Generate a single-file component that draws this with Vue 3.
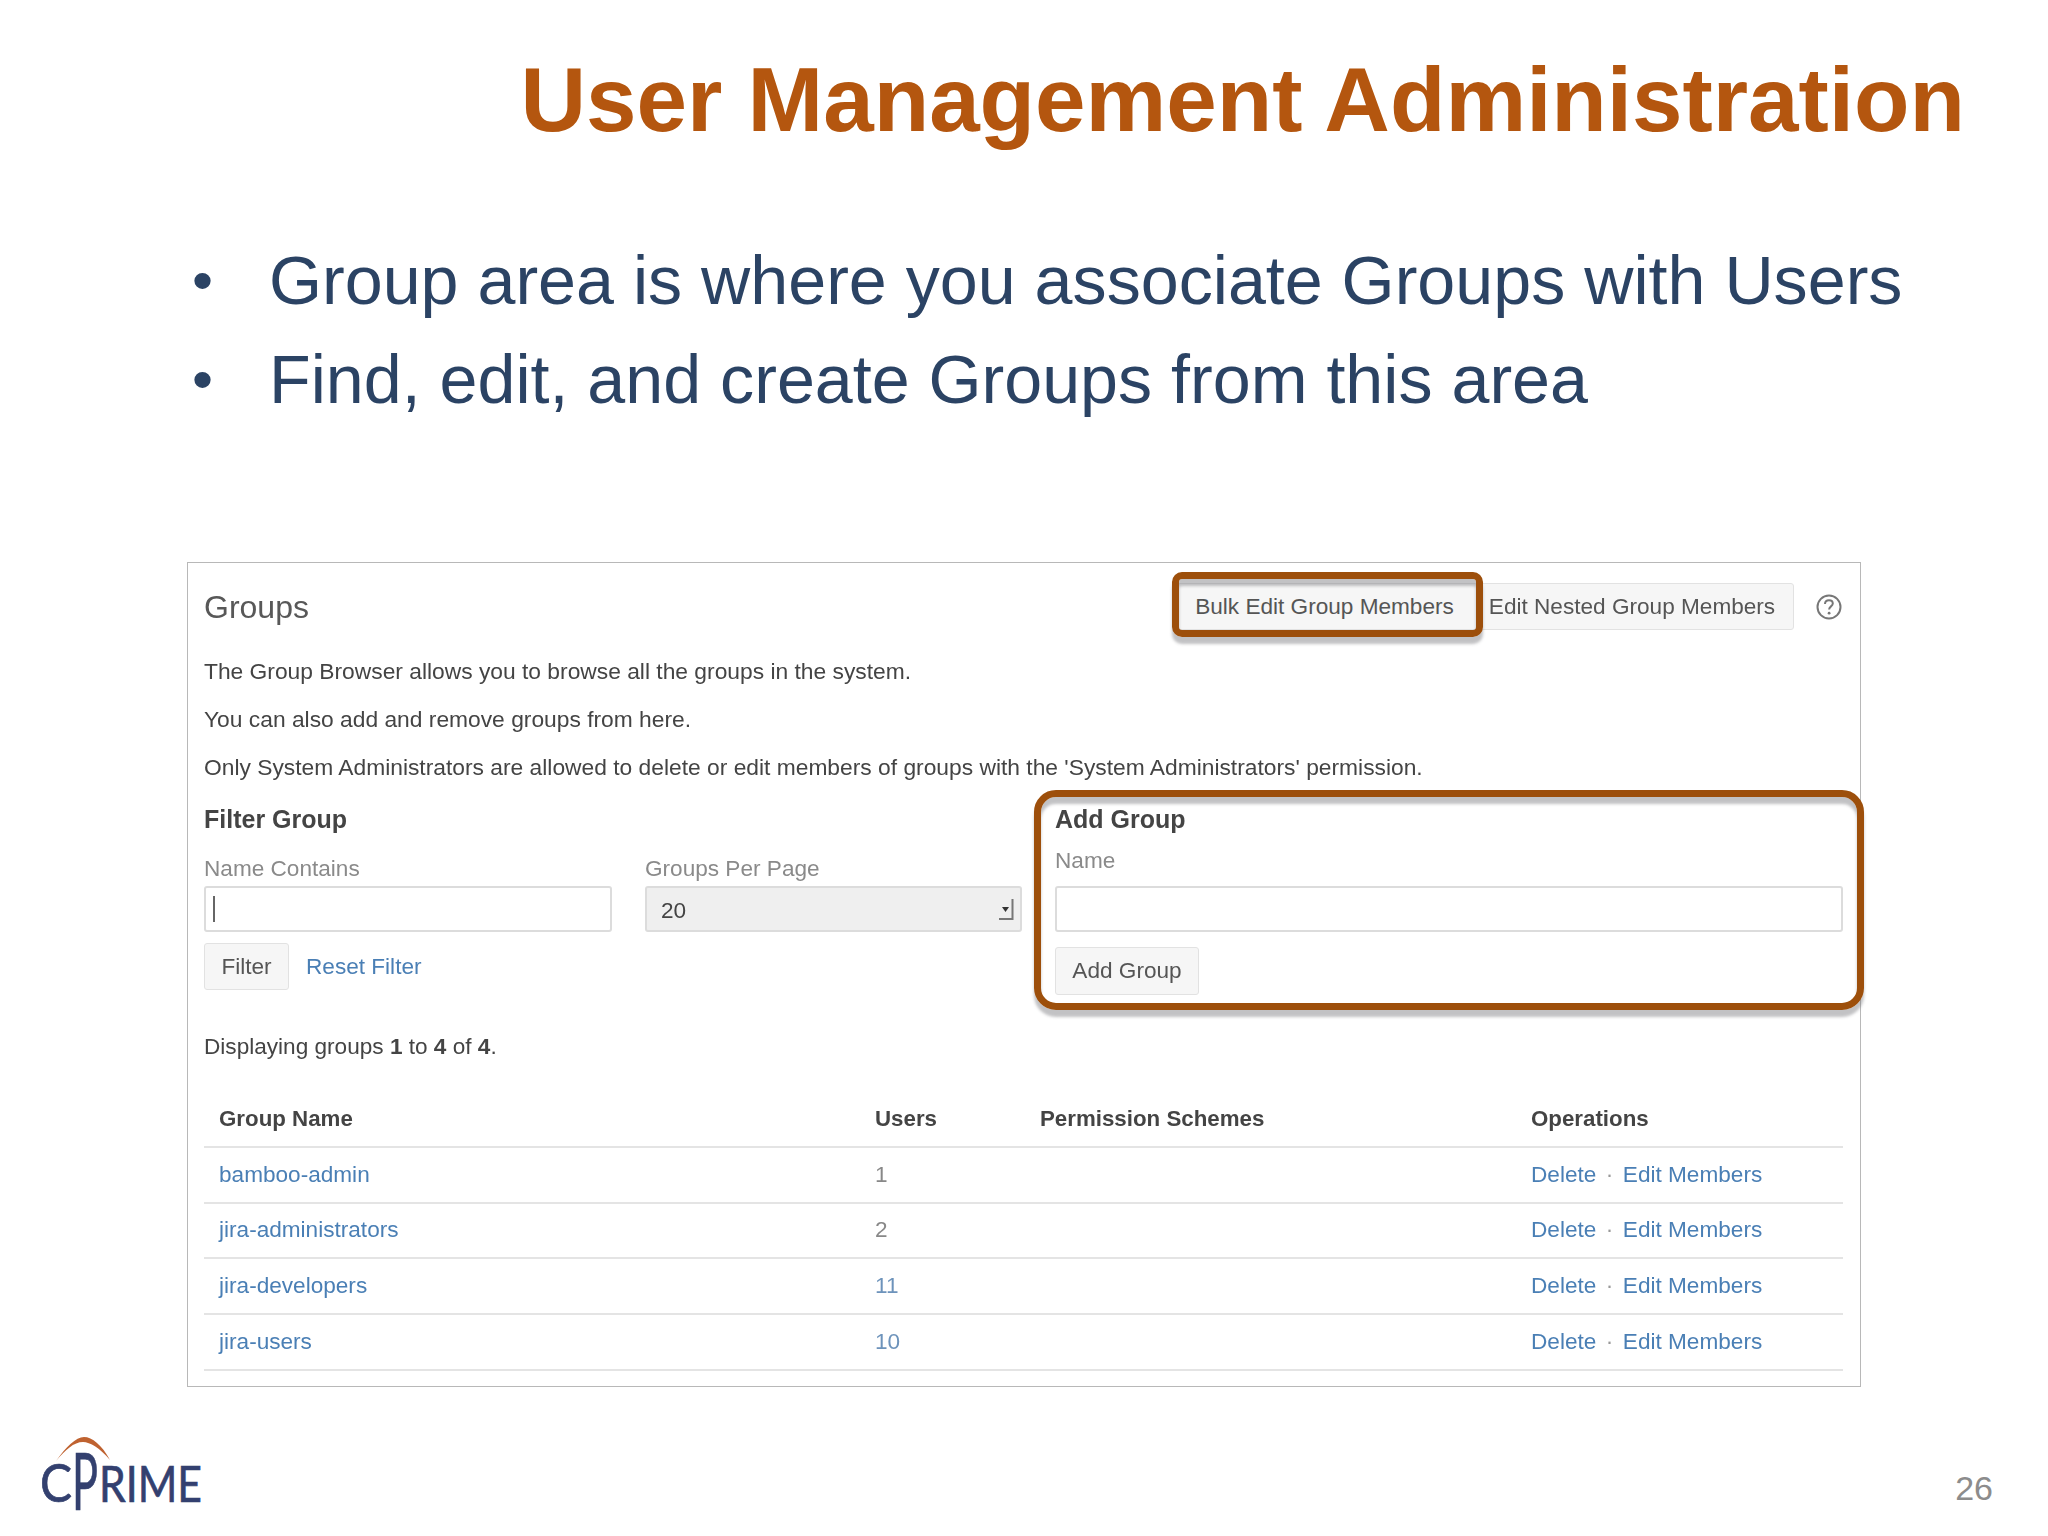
<template>
  <div class="slide">
    <h1 class="title">User Management Administration</h1>

    <ul class="bullets">
      <li v-for="b in bullets" :key="b"><span class="dot">•</span>{{ b }}</li>
    </ul>

    <section class="panel">
      <div class="panel-head">
        <h2>Groups</h2>
        <div class="head-actions">
          <button class="btn btn-bulk">
            Bulk Edit Group Members
            <span class="mark mark-bulk"></span>
          </button>
          <button class="btn btn-nested">Edit Nested Group Members</button>
          <svg class="help" viewBox="0 0 28 28" width="28" height="28">
            <circle cx="14" cy="14" r="11.5" fill="none" stroke="#777" stroke-width="2" />
            <path d="M10 11c0-2.4 1.8-3.8 4-3.8s3.8 1.4 3.8 3.3c0 2.9-3.7 2.9-3.7 6" fill="none" stroke="#777" stroke-width="2" />
            <circle cx="14.1" cy="20.2" r="1.4" fill="#777" />
          </svg>
        </div>
      </div>

      <p v-for="line in intro" :key="line" class="intro">{{ line }}</p>

      <div class="forms">
        <div class="filter">
          <h3>Filter Group</h3>
          <div class="filter-fields">
            <div class="col-name">
              <label>Name Contains</label>
              <div class="field"><span class="caret"></span></div>
            </div>
            <div class="col-per">
              <label>Groups Per Page</label>
              <div class="field select">
                <span class="select-value">20</span>
                <svg class="drop" viewBox="0 0 16 22" width="16" height="22">
                  <path d="M14.5 1v20H1" fill="none" stroke="#777" stroke-width="2" />
                  <path d="M4 9h7l-3.5 5z" fill="#333" />
                </svg>
              </div>
            </div>
          </div>
          <div class="filter-actions">
            <button class="btn btn-filter">Filter</button>
            <a class="link">Reset Filter</a>
          </div>
        </div>

        <div class="add">
          <span class="mark mark-add"></span>
          <h3>Add Group</h3>
          <label class="add-label">Name</label>
          <div class="field add-field"></div>
          <button class="btn btn-add">Add Group</button>
        </div>
      </div>

      <p class="count">Displaying groups <b>1</b> to <b>4</b> of <b>4</b>.</p>

      <table class="groups">
        <thead>
          <tr>
            <th class="c-name">Group Name</th>
            <th class="c-users">Users</th>
            <th class="c-perm">Permission Schemes</th>
            <th>Operations</th>
          </tr>
        </thead>
        <tbody>
          <tr v-for="g in groups" :key="g.name">
            <td><a class="link">{{ g.name }}</a></td>
            <td :class="{ link: g.users >= 10 }" class="users">{{ g.users }}</td>
            <td></td>
            <td class="ops"><a class="link">Delete</a><span class="sep">·</span><a class="link">Edit Members</a></td>
          </tr>
        </tbody>
      </table>
    </section>

    <footer class="foot">
      <svg class="logo" viewBox="0 0 170 80" width="170" height="80">
        <path d="M16 26C26 12 36 2 44 2c8 0 18 8 26 23C60 13 50 7 43 7 34 7 25 15 16 26z" fill="#bf6230" />
        <text x="0" y="67" class="logo-c" textLength="32" lengthAdjust="spacingAndGlyphs">C</text>
        <text x="32" y="75" class="logo-p" textLength="26" lengthAdjust="spacingAndGlyphs">P</text>
        <text x="59" y="67" class="logo-t" textLength="103" lengthAdjust="spacingAndGlyphs">RIME</text>
      </svg>
      <span class="page">26</span>
    </footer>
  </div>
</template>

<script setup>
const bullets = [
  'Group area is where you associate Groups with Users',
  'Find, edit, and create Groups from this area'
]

const intro = [
  'The Group Browser allows you to browse all the groups in the system.',
  'You can also add and remove groups from here.',
  "Only System Administrators are allowed to delete or edit members of groups with the 'System Administrators' permission."
]

const groups = [
  { name: 'bamboo-admin', users: 1 },
  { name: 'jira-administrators', users: 2 },
  { name: 'jira-developers', users: 11 },
  { name: 'jira-users', users: 10 }
]
</script>

<style>
html, body {
  background: #fff;
}
</style>

<style scoped>
.slide {
  width: 2048px;
  height: 1536px;
  box-sizing: border-box;
  overflow: hidden;
  background: #fff;
  font-family: "Liberation Sans", Arial, sans-serif;
  display: flex;
  flex-direction: column;
}

.title {
  margin: 0;
  padding: 50px 83px 0 0;
  text-align: right;
  font-size: 90.8px;
  line-height: 100px;
  font-weight: 700;
  color: #b4560f;
}

.bullets {
  list-style: none;
  margin: 81px 0 0;
  padding: 0 0 0 190px;
  font-size: 68.2px;
  line-height: 99px;
  color: #2b4364;
}

.bullets li {
  display: flex;
}

.dot {
  width: 79px;
  font-size: 60px;
  padding-left: 2px;
  box-sizing: border-box;
}

/* screenshot inside the slide */
.panel {
  width: 1674px;
  height: 825px;
  box-sizing: border-box;
  margin: 133px 0 0 187px;
  padding: 20px 17px 0 16px;
  border: 1.5px solid #b8b8b8;
  font-size: 22.6px;
  color: #444;
  filter: blur(0.6px);
}

.panel-head {
  display: flex;
  justify-content: space-between;
  align-items: center;
  height: 47px;
}

.panel-head h2 {
  margin: 2px 0 0;
  font-size: 32px;
  font-weight: 400;
  color: #585858;
}

.head-actions {
  display: flex;
  align-items: center;
}

.btn {
  box-sizing: border-box;
  background: #f6f6f6;
  border: 1.5px solid #e2e2e2;
  border-radius: 3px;
  font-family: inherit;
  font-size: 22.6px;
  color: #555;
  padding: 0;
}

.btn-bulk {
  position: relative;
  width: 301px;
  height: 47px;
  padding-right: 6px;
}

.btn-nested {
  width: 316px;
  height: 47px;
  padding-right: 8px;
}

.help {
  margin: 0 0 0 21px;
}

.mark {
  position: absolute;
  box-sizing: border-box;
  border: 7px solid #9d4f0b;
  border-radius: 10px;
  box-shadow: 0 7px 3px rgba(120, 120, 125, 0.45), inset 0 7px 3px rgba(120, 120, 125, 0.45);
  pointer-events: none;
}

.mark-bulk {
  left: -6px;
  right: -6px;
  top: -12px;
  bottom: -8px;
}

.mark-add {
  left: -21px;
  right: -21px;
  top: -11px;
  bottom: -15px;
  border-radius: 22px;
}

.intro {
  margin: 0;
  font-size: 22.8px;
  line-height: 48px;
  color: #444;
}

.intro:first-of-type {
  margin-top: 17px;
}

.forms {
  display: flex;
  margin-top: 10px;
}

.forms h3 {
  margin: 0;
  font-size: 25px;
  line-height: 36px;
  color: #444;
}

.forms label {
  display: block;
  line-height: 30px;
  color: #8a8a8a;
}

.filter {
  width: 851px;
}

.filter-fields {
  display: flex;
  gap: 33px;
  margin-top: 17px;
}

.col-name {
  width: 408px;
}

.col-per {
  width: 377px;
}

.field {
  box-sizing: border-box;
  height: 46px;
  margin-top: 2px;
  border: 2px solid #dcdcdc;
  border-radius: 3px;
  background: #fff;
  display: flex;
  align-items: center;
  padding-left: 7px;
}

.caret {
  width: 2px;
  height: 26px;
  background: #666;
}

.select {
  background: #efefef;
  justify-content: space-between;
  padding: 0 6px 0 14px;
  color: #444;
  font-size: 22.6px;
}

.select-value {
  padding-top: 3px;
}

.filter-actions {
  display: flex;
  align-items: center;
  gap: 17px;
  margin-top: 11px;
}

.btn-filter {
  width: 85px;
  height: 47px;
}

.link {
  color: #4a7fb5;
}

.add {
  position: relative;
  flex: 1;
}

.add-label {
  margin-top: 9px;
}

.add-field {
  margin-top: 10px;
}

.btn-add {
  display: block;
  width: 144px;
  height: 48px;
  margin-top: 15px;
}

.count {
  margin: 37px 0 0;
  line-height: 30px;
}

.groups {
  width: 100%;
  margin-top: 30px;
  border-collapse: collapse;
  table-layout: fixed;
}

.groups th,
.groups td {
  height: 53.8px;
  padding: 0 0 0 15px;
  text-align: left;
  border-bottom: 2px solid #e4e4e4;
}

.groups th {
  font-size: 22.3px;
  color: #444;
}

.c-name {
  width: 641px;
}

.c-users {
  width: 150px;
}

.c-perm {
  width: 476px;
}

.users {
  color: #888;
}

.users.link {
  color: #6d93bb;
}

.sep {
  margin: 0 9.5px;
  color: #999;
}

.foot {
  flex: 1;
  display: flex;
  justify-content: space-between;
  align-items: flex-start;
  padding: 48px 55px 0 40px;
}

.logo {
  overflow: visible;
}

.logo text {
  fill: #33406f;
  stroke: #33406f;
  stroke-width: 0.7px;
  font-family: "Lato", "Liberation Sans", sans-serif;
}

.logo-c {
  font-size: 52px;
}

.logo-p {
  font-size: 79px;
}

.logo-t {
  font-size: 51px;
}

.page {
  margin-top: 34px;
  font-size: 34px;
  color: #8c8c8c;
}
</style>
